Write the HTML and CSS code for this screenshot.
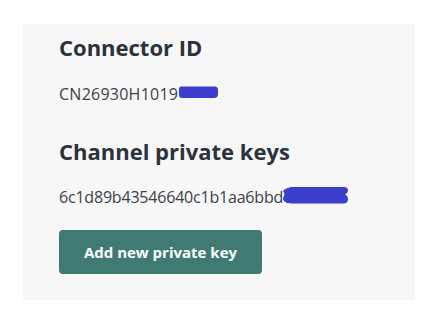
FILE: index.html
```html
<!DOCTYPE html>
<html lang="en">
<head>
<meta charset="utf-8">
<title>Connector settings</title>
<link rel="stylesheet" href="styles.css">
</head>
<body>
<section class="panel">
  <h2 class="heading heading-first">Connector ID</h2>
  <p class="value value-id">CN26930H1019<svg class="redact redact-id" width="41" height="14" viewBox="0 0 41 14"><path d="M3 1.5 H37 Q40 1.5 40 5 V9 Q40 13 36 13 H4 Q1 13 1 9.5 V5 Q1 1.5 3 1.5 Z" fill="#3b3fcc"/></svg></p>
  <h2 class="heading heading-second">Channel private keys</h2>
  <p class="value value-key">6c1d89b43546640c1b1aa6bbd<svg class="redact redact-key" width="67" height="19" viewBox="0 0 67 19"><path d="M6 2 Q8 0.5 14 1 H62 Q66 1 66 4.5 Q66 7 63 8.5 Q66 10 66 13 Q66 17.5 61 17.5 H10 Q4 17.5 2 15 Q0 13 2 10 Q3 7 1 5.5 Q2 3 6 2 Z" fill="#3b3fcc"/></svg></p>
  <button class="btn" type="button">Add new private key</button>
</section>
</body>
</html>
```

FILE: styles.css
```css
html, body {
  margin: 0;
  padding: 0;
  background: #ffffff;
}

body {
  font-family: "Open Sans", "Liberation Sans", sans-serif;
}

.panel {
  margin: 24px 14px 0 23px;
  width: 392px;
  height: 276px;
  box-sizing: border-box;
  background: #f7f7f7;
  padding: 9px 0 0 36px;
  display: flex;
  flex-direction: column;
  align-items: flex-start;
}

.heading {
  margin: 0;
  font-size: 22px;
  line-height: 28px;
  font-weight: 700;
  color: #2b323c;
}

.heading-second {
  margin-top: 33px;
}

.value {
  margin: 23px 0 0;
  font-size: 16px;
  line-height: 20px;
  color: #3c4149;
  display: flex;
  align-items: center;
}

.value-id {
  letter-spacing: 0.25px;
}

.value-key {
  margin-top: 22px;
  letter-spacing: -0.2px;
}

.redact {
  display: block;
}

.redact-id {
  margin-left: 0;
  margin-top: -4px;
}

.redact-key {
  margin-left: -1px;
  margin-top: -4px;
}

.btn {
  margin-top: 23px;
  width: 203px;
  height: 44px;
  border: none;
  border-radius: 4px;
  background: #3f7a73;
  color: #ffffff;
  font-family: "Open Sans", "Liberation Sans", sans-serif;
  font-size: 15px;
  font-weight: 700;
  padding: 0;
}
```
